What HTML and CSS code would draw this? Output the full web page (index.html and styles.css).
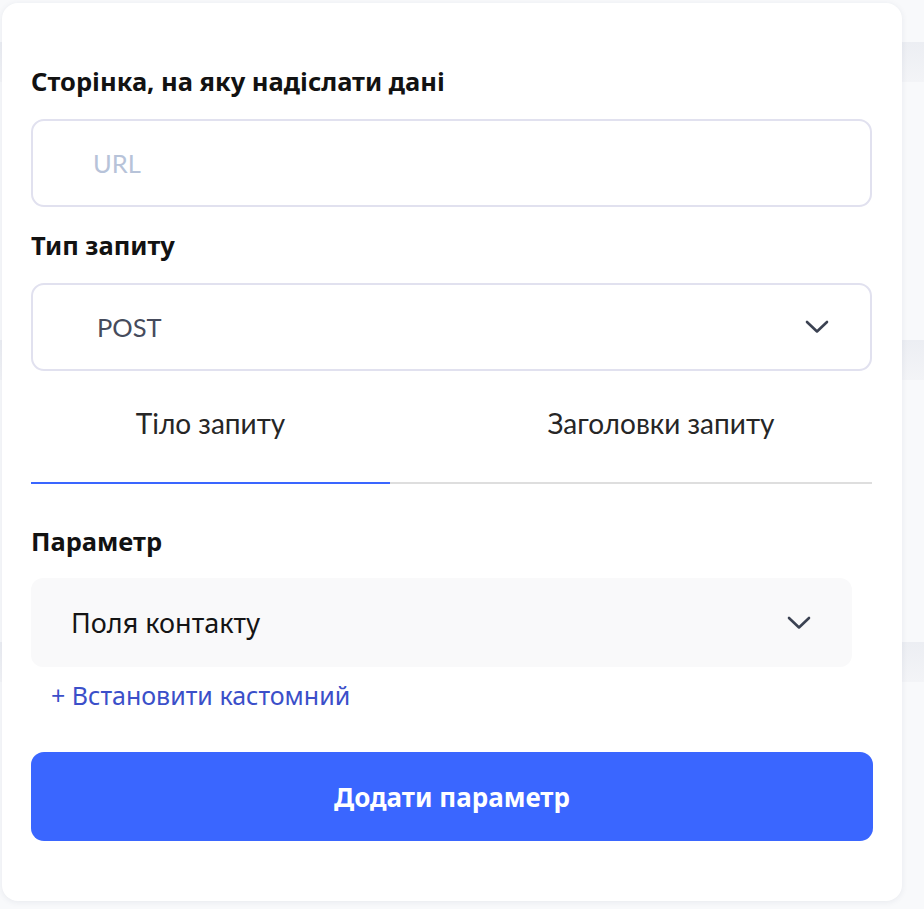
FILE: index.html
```html
<!DOCTYPE html>
<html lang="uk">
<head>
<meta charset="utf-8">
<title>Параметри запиту</title>
<link rel="stylesheet" href="styles.css">
</head>
<body>
<div class="card">
  <div class="label label-first">Сторінка, на яку надіслати дані</div>
  <div class="field"><span class="placeholder">URL</span></div>

  <div class="label">Тип запиту</div>
  <div class="field select">
    <span class="value">POST</span>
    <svg class="chev" width="24" height="14" viewBox="0 0 24 14"><path d="M2 2 L12 11.5 L22 2" fill="none" stroke="#3b4252" stroke-width="2.6" stroke-linecap="round" stroke-linejoin="round"/></svg>
  </div>

  <div class="tabs">
    <div class="tab active">Тіло запиту</div>
    <div class="tab">Заголовки запиту</div>
  </div>

  <div class="label label-param">Параметр</div>
  <div class="param">
    <span class="param-value">Поля контакту</span>
    <svg class="chev" width="24" height="14" viewBox="0 0 24 14"><path d="M2 2 L12 11.5 L22 2" fill="none" stroke="#3b4252" stroke-width="2.6" stroke-linecap="round" stroke-linejoin="round"/></svg>
  </div>
  <div class="link">+ Встановити кастомний</div>

  <button class="btn">Додати параметр</button>
</div>
</body>
</html>
```
FILE: styles.css
```css
* { box-sizing: border-box; }
html, body { margin: 0; padding: 0; }
body {
  width: 924px;
  height: 909px;
  overflow: hidden;
  font-family: "Noto Sans", "Open Sans", sans-serif;
  background: linear-gradient(to bottom,
    #f8f9fb 0, #f8f9fb 42px,
    #eceef3 42px, #f3f4f7 82px,
    #f8f9fb 82px, #f8f9fb 340px,
    #eceef3 340px, #f3f4f7 380px,
    #f8f9fb 380px, #f8f9fb 642px,
    #eceef3 642px, #f3f4f7 682px,
    #f8f9fb 682px);
  padding: 3px 0 0 2px;
}
.card {
  width: 900px;
  height: 898px;
  background: #fff;
  border-radius: 16px;
  box-shadow: 0 1px 6px rgba(40, 50, 90, 0.08);
  padding: 63px 30px 0 29px;
  display: flex;
  flex-direction: column;
}
.label {
  font-size: 25.5px;
  font-weight: 700;
  line-height: 30px;
  color: #121212;
  margin-top: 23px;
  margin-bottom: 23px;
}
.label-first { margin-top: 0; margin-bottom: 23px; }
.field {
  height: 88px;
  width: 841px;
  border: 2px solid #e1e1ef;
  border-radius: 13px;
  display: flex;
  align-items: center;
  padding: 0 41px 0 60px;
  font-family: Lato, sans-serif;
  font-size: 25.5px;
}
.placeholder { color: #b7c3d9; }
.select { justify-content: space-between; padding-left: 64px; }
.value { color: #464b5c; }
.chev { display: block; }
.tabs {
  margin-top: 37px;
  width: 841px;
  display: grid;
  grid-template-columns: 359px 1fr;
  border-bottom: 2px solid #dedede;
  font-family: Lato, sans-serif;
  font-size: 28px;
  color: #262626;
}
.tab {
  line-height: 30px;
  height: 30px;
  text-align: center;
  padding-bottom: 44px;
  margin-bottom: -2px;
  border-bottom: 2px solid transparent;
  box-sizing: content-box;
}
.tab.active { border-bottom-color: #3a66ff; }
.tab:last-child { padding-left: 60px; }
.label-param { margin-top: 42px; margin-bottom: 22px; }
.param {
  width: 821px;
  height: 89px;
  background: #f9f9fa;
  border-radius: 12px;
  display: flex;
  align-items: center;
  justify-content: space-between;
  padding: 0 41px 0 40px;
}
.param-value { font-size: 27px; color: #141414; }
.link {
  margin-top: 13px;
  padding-left: 20px;
  font-size: 25px;
  line-height: 30px;
  color: #3b4fc9;
}
.btn {
  margin-top: 42px;
  width: 842px;
  height: 89px;
  border: 0;
  border-radius: 13px;
  background: #3a66ff;
  color: #fff;
  font-family: "Noto Sans", sans-serif;
  font-size: 26px;
  font-weight: 700;
}
```
